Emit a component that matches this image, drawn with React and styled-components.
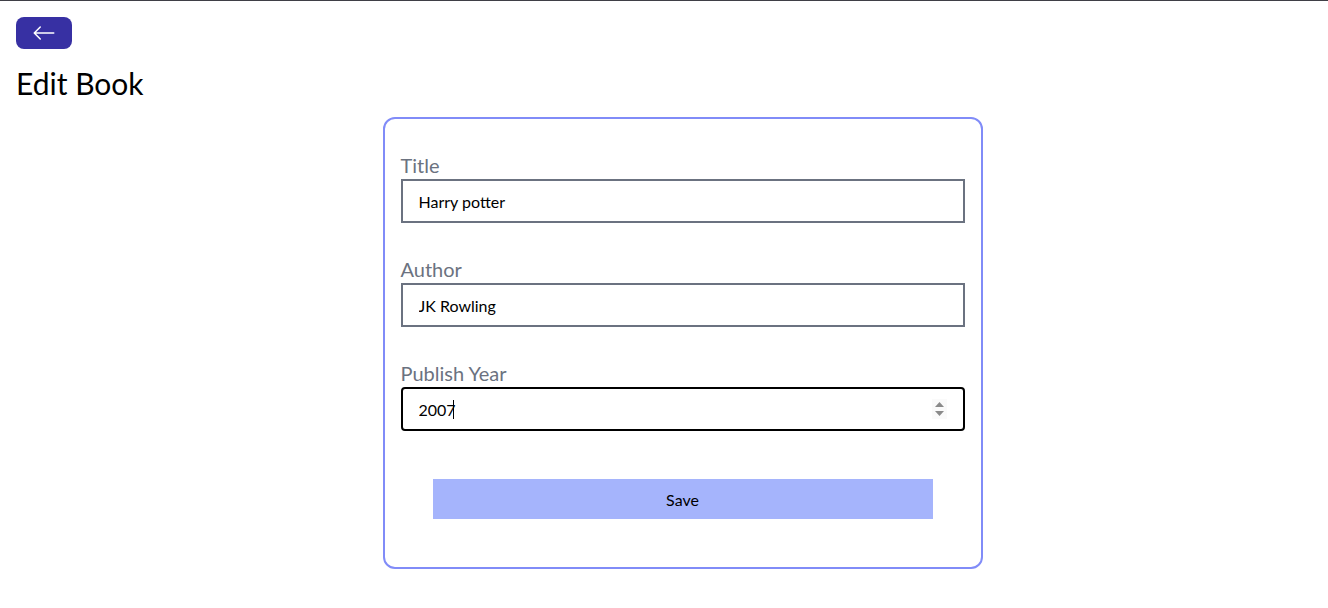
import styled, { createGlobalStyle } from "styled-components";
import { BsArrowLeft } from "react-icons/bs";

const GlobalStyle = createGlobalStyle`
  html {
    border-top: 1px solid #3f3f46;
  }
  body {
    margin: 0;
    background: #ffffff;
    font-family: "Lato", "Noto Sans", sans-serif;
    color: #000000;
  }
  * {
    box-sizing: border-box;
  }
`;

const Page = styled.div`
  padding: 16px;
`;

const BackButton = styled.button`
  display: flex;
  align-items: center;
  justify-content: center;
  width: 56px;
  height: 32px;
  padding: 0;
  border: none;
  border-radius: 8px;
  background: #3730a3;
  color: #ffffff;
  font-size: 24px;
  cursor: pointer;
`;

const Heading = styled.h1`
  margin: 16px 0;
  font-size: 30px;
  line-height: 36px;
  font-weight: 400;
`;

const FormArea = styled.div`
  padding-left: 37px;
`;

const Card = styled.form`
  display: flex;
  flex-direction: column;
  width: 600px;
  margin: 0 auto;
  padding: 16px;
  border: 2px solid #818cf8;
  border-radius: 12px;
`;

const Field = styled.div`
  display: flex;
  flex-direction: column;
  margin: 16px 0;
`;

const Label = styled.label`
  font-size: 20px;
  line-height: 28px;
  color: #6b7280;
`;

const InputBox = styled.div`
  position: relative;
`;

const Input = styled.input`
  width: 100%;
  height: 44px;
  padding: 0 16px;
  border: 2px solid ${({ $focused }) => ($focused ? "#000000" : "#6b7280")};
  border-radius: ${({ $focused }) => ($focused ? "4px" : "0")};
  font-family: inherit;
  font-size: 16px;
  color: #000000;
  background: #ffffff;
  outline: none;
  caret-color: transparent;
  appearance: textfield;
  &::-webkit-inner-spin-button,
  &::-webkit-outer-spin-button {
    -webkit-appearance: none;
    margin: 0;
  }
`;

const Caret = styled.span`
  position: absolute;
  left: 52px;
  top: 13px;
  width: 1px;
  height: 19px;
  background: #000000;
  pointer-events: none;
`;

const Spinner = styled.div`
  position: absolute;
  right: 18px;
  top: 50%;
  transform: translateY(-50%);
  display: flex;
  flex-direction: column;
  align-items: center;
  gap: 4px;
  width: 15px;
  padding: 3px 0;
  background: #fafafa;
`;

const SaveButton = styled.button`
  height: 40px;
  margin: 32px;
  padding: 8px;
  border: none;
  background: #a5b4fc;
  font-family: inherit;
  font-size: 16px;
  color: #000000;
  cursor: pointer;
`;

const Arrow = ({ up }) => (
  <svg width="9" height="5" viewBox="0 0 9 5">
    <path d={up ? "M0 5 L4.5 0 L9 5 Z" : "M0 0 L4.5 5 L9 0 Z"} fill="#8a8a8a" />
  </svg>
);

export default function App() {
  return (
    <>
      <GlobalStyle />
      <Page>
        <BackButton type="button" aria-label="Back">
          <BsArrowLeft />
        </BackButton>
        <Heading>Edit Book</Heading>
        <FormArea>
          <Card onSubmit={(e) => e.preventDefault()}>
            <Field>
              <Label>Title</Label>
              <Input type="text" defaultValue="Harry potter" />
            </Field>
            <Field>
              <Label>Author</Label>
              <Input type="text" defaultValue="JK Rowling" />
            </Field>
            <Field>
              <Label>Publish Year</Label>
              <InputBox>
                <Input type="number" defaultValue="2007" $focused />
                <Caret />
                <Spinner>
                  <Arrow up />
                  <Arrow />
                </Spinner>
              </InputBox>
            </Field>
            <SaveButton type="submit">Save</SaveButton>
          </Card>
        </FormArea>
      </Page>
    </>
  );
}
